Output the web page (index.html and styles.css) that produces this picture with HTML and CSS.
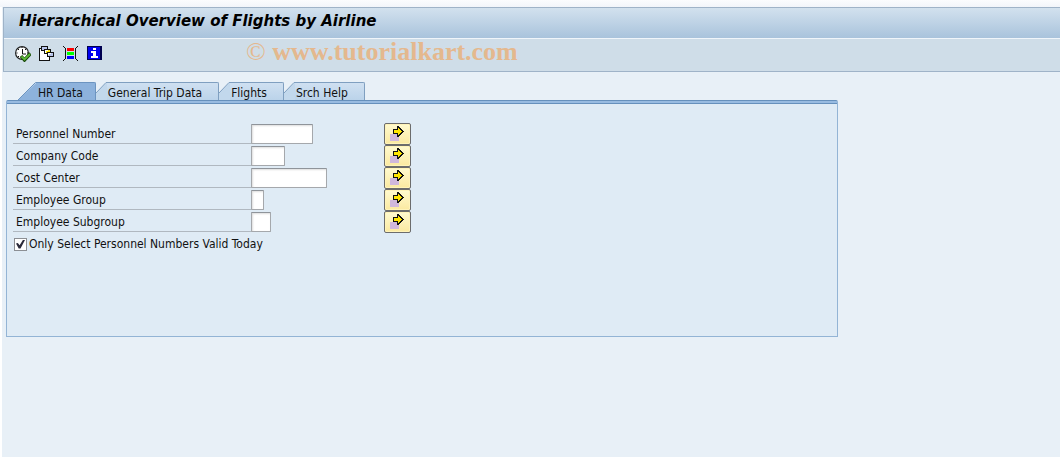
FILE: index.html
```
<!DOCTYPE html>
<html lang="en">
<head>
<meta charset="utf-8">
<title>Hierarchical Overview of Flights by Airline</title>
<link rel="stylesheet" href="styles.css">
</head>
<body>
<div class="window">
  <header class="header">
    <h1 class="title">Hierarchical Overview of Flights by Airline</h1>
    <div class="toolbar">
      <button class="tool" type="button" aria-label="Execute">
        <svg width="16" height="16" viewBox="0 0 16 16"><circle cx="7" cy="7" r="6.4" fill="#fff" stroke="#222" stroke-width="1.2"/><path d="M7.500 3v5h3.500M7 1v1M1.500 7h1M12 7h1M3 3l1 1M11 3l-1 1M3 11l1-1" fill="none" stroke="#111"/><path d="M6 10l3.500 4L15.500 7.500" fill="none" stroke="#184808" stroke-width="3.400"/><path d="M6.500 10.500l3 3L15 8" fill="none" stroke="#5cb838" stroke-width="1.800"/></svg>
      </button>
      <button class="tool" type="button" aria-label="Get variant">
        <svg width="16" height="16" viewBox="0 0 16 16" shape-rendering="crispEdges"><path d="M.5 2.500h2v-2h3v3h5v11H.5z" fill="#fff" stroke="#111"/><path d="M2.500 .5h6v4h-6z" fill="#b8c4ec" stroke="#111"/><path d="M5.500 3.500h6v4h-6z" fill="#ffe600" stroke="#111"/><path d="M6 4h3v1H7v2H6z" fill="#fff"/><path d="M8.500 6.500h6v4h-6z" fill="#b8c4ec" stroke="#111"/><path d="M9 7h3v1h-2v1H9z" fill="#fff"/></svg>
      </button>
      <button class="tool" type="button" aria-label="Dynamic selections">
        <svg width="16" height="16" viewBox="0 0 16 16" shape-rendering="crispEdges"><path d="M1 1h1v1H1zM2 2h1v11H2zM1 13h1v1H1zM0 0h1v1H0zM0 14h1v1H0zM14 0h1v1h-1zM13 1h1v1h-1zM12 2h1v11h-1zM13 13h1v1h-1zM14 14h1v1h-1z" fill="#111"/><path d="M4 2h7v3H4z" fill="red"/><path d="M4 6h7v3H4z" fill="#0f0"/><path d="M4 10h7v3H4z" fill="#00f"/></svg>
      </button>
      <button class="tool" type="button" aria-label="Information">
        <svg width="16" height="16" viewBox="0 0 16 16" shape-rendering="crispEdges"><path d="M0 0h15v14H0z" fill="#000050"/><path d="M1 1h12v12H1z" fill="#0000f0"/><path d="M6 2h3v2H6zM4 5h5v5h2v2H4v-2h2V7H4z" fill="#fff"/></svg>
      </button>
      <span class="watermark"><span class="copy">©</span> www.tutorialkart.com</span>
    </div>
  </header>
  <main class="content">
    <div class="tabs" role="tablist">
      <button class="tab active" type="button" role="tab" aria-selected="true"><svg class="slant" width="20" height="18" viewBox="0 0 20 18"><path d="M1 18L19 1h1v17z" fill="#8db2dc"/><path d="M1 18L18.500 .5H20" fill="none" stroke="#6c94c0"/></svg><span class="caption">HR Data</span></button>
      <button class="tab" type="button" role="tab" aria-selected="false"><svg class="slant" width="11" height="18" viewBox="0 0 11 18"><path d="M0 18V11L10 1h1v17z" fill="#c2d8ec"/><path d="M0 11L10 .5h1" fill="none" stroke="#7f9fc0"/></svg><span class="caption">General Trip Data</span></button>
      <button class="tab" type="button" role="tab" aria-selected="false"><svg class="slant" width="11" height="18" viewBox="0 0 11 18"><path d="M0 18V11L10 1h1v17z" fill="#c2d8ec"/><path d="M0 11L10 .5h1" fill="none" stroke="#7f9fc0"/></svg><span class="caption">Flights</span></button>
      <button class="tab" type="button" role="tab" aria-selected="false"><svg class="slant" width="11" height="18" viewBox="0 0 11 18"><path d="M0 18V11L10 1h1v17z" fill="#c2d8ec"/><path d="M0 11L10 .5h1" fill="none" stroke="#7f9fc0"/></svg><span class="caption">Srch Help</span></button>
    </div>
    <form class="panel">
      <svg class="symbols" aria-hidden="true"><symbol id="arrow" viewBox="0 0 16 16"><path d="M1 9h9v7H1z" fill="#d0b8dc"/><path d="M8 1h2v1h1v1h1v1h1v1h1v1h1v1h-1v1h-1v1h-1v1h-1v1h-1v1H8V9H4V4h4z" fill="#111"/><path d="M9 3h1v1h1v1h1v1h1v1h-1v1h-1v1h-1v1H9V8H5V5h4z" fill="#ffe600"/></symbol></svg>
      <div class="row"><label for="pernr">Personnel Number</label><span class="field"><input class="w-pernr" id="pernr" type="text"></span><button class="more" type="button" aria-label="Multiple selection"><svg class="arrow"><use href="#arrow"/></svg></button></div>
      <div class="row"><label for="code">Company Code</label><span class="field"><input class="w-code" id="code" type="text"></span><button class="more" type="button" aria-label="Multiple selection"><svg class="arrow"><use href="#arrow"/></svg></button></div>
      <div class="row"><label for="cost">Cost Center</label><span class="field"><input class="w-cost" id="cost" type="text"></span><button class="more" type="button" aria-label="Multiple selection"><svg class="arrow"><use href="#arrow"/></svg></button></div>
      <div class="row"><label for="group">Employee Group</label><span class="field"><input class="w-group" id="group" type="text"></span><button class="more" type="button" aria-label="Multiple selection"><svg class="arrow"><use href="#arrow"/></svg></button></div>
      <div class="row"><label for="sub">Employee Subgroup</label><span class="field"><input class="w-sub" id="sub" type="text"></span><button class="more" type="button" aria-label="Multiple selection"><svg class="arrow"><use href="#arrow"/></svg></button></div>
      <div class="check"><input id="valid" type="checkbox" checked><label for="valid">Only Select Personnel Numbers Valid Today</label></div>
    </form>
  </main>
</div>
</body>
</html>
```
FILE: styles.css
```
* { box-sizing: border-box; }
body {
  margin: 0;
  min-height: 100vh;
  display: flex;
  padding: 7px 0 0 2px;
  background: linear-gradient(#fbfcfe, #f2f5fa 7px, #fff 7px);
  font: 12px/16px "DejaVu Sans Condensed", Tahoma, sans-serif;
  color: #111;
}
button, input { font: inherit; color: inherit; margin: 0; }
.window { flex: 1; background: #e8f0f7; }
.header {
  margin-left: 1px;
  border: 1px solid #9fb3c8;
  border-right: 0;
  background: #cfdde8;
}
.title {
  margin: 0;
  height: 31px;
  padding: 3px 15px;
  border-bottom: 1px solid #f0f5fa;
  background: linear-gradient(#d2e1ee, #a9c3dc);
  font: italic bold 15px/20px "DejaVu Sans", Verdana, sans-serif;
  color: #000;
}
.toolbar { display: flex; align-items: center; gap: 8px; height: 32px; padding: 0 0 2px 11px; }
.tool { width: 16px; height: 16px; padding: 0; border: 0; background: none; }
.tool svg { display: block; }
.watermark {
  margin-left: 135px;
  padding-bottom: 4px;
  font: bold 26px/26px "Liberation Serif", serif;
  color: #e4b88e;
  white-space: nowrap;
}
.copy { font-weight: normal; }
.content { width: 78.6%; margin: 10px 0 0 4px; }
.tabs { display: flex; height: 18px; padding-left: 11px; }
.tab { display: flex; padding: 0; border: 0; background: none; }
.slant { flex: none; display: block; }
.caption {
  height: 18px;
  padding: 2px 16px 0 1px;
  border: solid #7f9fc0;
  border-width: 1px 1px 0 0;
  border-top-right-radius: 2px;
  background: linear-gradient(#cfe0f1, #bbd3ea);
  white-space: nowrap;
}
.active .caption { padding-right: 12px; background: #8db2dc; border-color: #6c94c0; }
.panel {
  min-height: 237px;
  padding: 22px 6px;
  border: 1px solid #93b4d5;
  border-top-color: #6690bc;
  border-radius: 2px 2px 0 0;
  background: linear-gradient(#98bbe1 2px, #6690bc 2px, #6690bc 3px, #dfebf5 3px);
}
.symbols { position: absolute; width: 0; height: 0; }
.row { display: grid; grid-template-columns: 238px 133px 27px; height: 22px; }
.row > label { height: 21px; padding: 4px 0 0 3px; line-height: 15px; border-bottom: 1px solid #b0b8c0; }
.field { display: block; padding-top: 1px; }
.field input {
  display: block;
  height: 20px;
  padding: 0 2px;
  border: 1px solid #a5a8ac;
  border-top-color: #8f949a;
  border-radius: 1px;
  background: #fff;
  box-shadow: inset 1px 1px 2px #ddd;
}
.w-pernr { width: 62px; }
.w-code { width: 34px; }
.w-cost { width: 76px; }
.w-group { width: 13px; }
.w-sub { width: 20px; }
.more {
  height: 22px;
  padding: 0 0 2px 4px;
  border: 1px solid #6c6c6c;
  border-radius: 2px;
  background: linear-gradient(#fffad0, #fbe9a0);
  box-shadow: inset 0 0 0 1px #fff3b8;
}
.arrow { display: block; width: 16px; height: 16px; shape-rendering: crispEdges; }
.check { display: flex; align-items: center; gap: 2px; height: 22px; padding-left: 1px; }
.check input {
  appearance: none;
  width: 13px;
  height: 13px;
  border: 1px solid #8c8f94;
  background: #fff;
  display: grid;
  place-items: center;
}
.check input:checked::before {
  content: "";
  width: 9px;
  height: 9px;
  background: #2a2a3a;
  clip-path: polygon(0 45%, 20% 40%, 40% 65%, 80% 0, 100% 5%, 50% 100%, 30% 100%);
}
```
